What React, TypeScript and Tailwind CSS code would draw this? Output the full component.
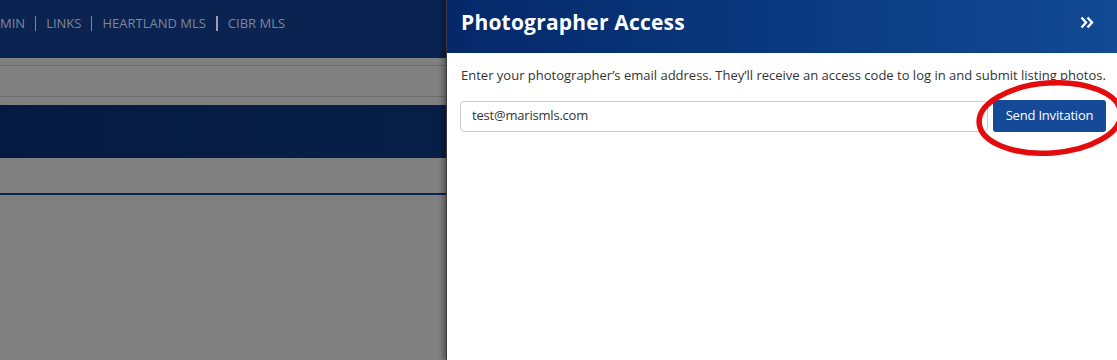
import React from "react";

export default function App() {
  return (
    <div
      className="w-[1117px] h-[360px] flex overflow-hidden relative"
      style={{ fontFamily: '"Open Sans", "Noto Sans", sans-serif' }}
    >
      {/* Dimmed page behind */}
      <div className="w-[446px] shrink-0 flex flex-col bg-[#808080]">
        <div className="h-[58px] bg-[#0a2350] flex items-start pt-[14px] text-[13px] text-[#7f8798] whitespace-nowrap">
          <span>MIN</span>
          <span className="mx-[10px] w-px h-[15px] bg-[#7f8798] mt-[2px]" />
          <span>LINKS</span>
          <span className="mx-[10px] w-px h-[15px] bg-[#7f8798] mt-[2px]" />
          <span>HEARTLAND MLS</span>
          <span className="mx-[10px] w-[2px] h-[15px] bg-[#98a0b0] mt-[2px]" />
          <span>CIBR MLS</span>
        </div>
        <div className="h-[7px]" />
        <div className="h-px bg-[#6b6b6b]" />
        <div className="h-[30px]" />
        <div className="h-px bg-[#6b6b6b]" />
        <div className="h-[8px]" />
        <div className="h-[53px] bg-gradient-to-r from-[#051a40] to-[#071f47]" />
        <div className="h-[35px]" />
        <div className="h-[2px] bg-[#0b2550]" />
        <div className="flex-1" />
      </div>

      {/* Panel */}
      <div className="flex-1 bg-white flex flex-col relative shadow-[-3px_0_5px_rgba(0,0,0,0.35)] border-l border-[#3a3a3a]">
        <div className="h-[53px] bg-gradient-to-r from-[#05286a] to-[#124a94] flex items-start justify-between pl-[14px] pr-[23px] pt-[8px]">
          <h2 className="text-white text-[21px] leading-[29px] font-bold tracking-[0.2px]">
            Photographer Access
          </h2>
          <svg width="14" height="13" viewBox="0 0 14 13" className="mt-[8px]">
            <path d="M1.5 1.5 L6 6.5 L1.5 11.5" stroke="white" strokeWidth="2.4" fill="none" />
            <path d="M7.5 1.5 L12 6.5 L7.5 11.5" stroke="white" strokeWidth="2.4" fill="none" />
          </svg>
        </div>
        <div className="pl-[13px] pr-[11px] pt-[13px]">
          <p className="text-[13px] text-[#333] leading-[18px] pl-px">
            Enter your photographer’s email address. They’ll receive an access code to log in and submit listing photos.
          </p>
          <div className="flex mt-[16px] gap-[5px] items-center">
            <div className="flex-1 h-[31px] border border-[#ccc] rounded-[4px] flex items-center pl-[11px] text-[13px] tracking-[-0.2px] text-[#333]">
              test@marismls.com
            </div>
            <button className="w-[113px] h-[32px] bg-[#144a98] text-white text-[13px] rounded-[3px] tracking-[-0.2px]">
              Send Invitation
            </button>
          </div>
        </div>
        <svg
          className="absolute left-[528px] top-[79px]"
          width="160"
          height="80"
          viewBox="0 0 160 80"
        >
          <ellipse cx="75" cy="39" rx="71" ry="35" stroke="#e30b0b" strokeWidth="5.5" fill="none" transform="rotate(-4 75 39)" />
        </svg>
      </div>
    </div>
  );
}
